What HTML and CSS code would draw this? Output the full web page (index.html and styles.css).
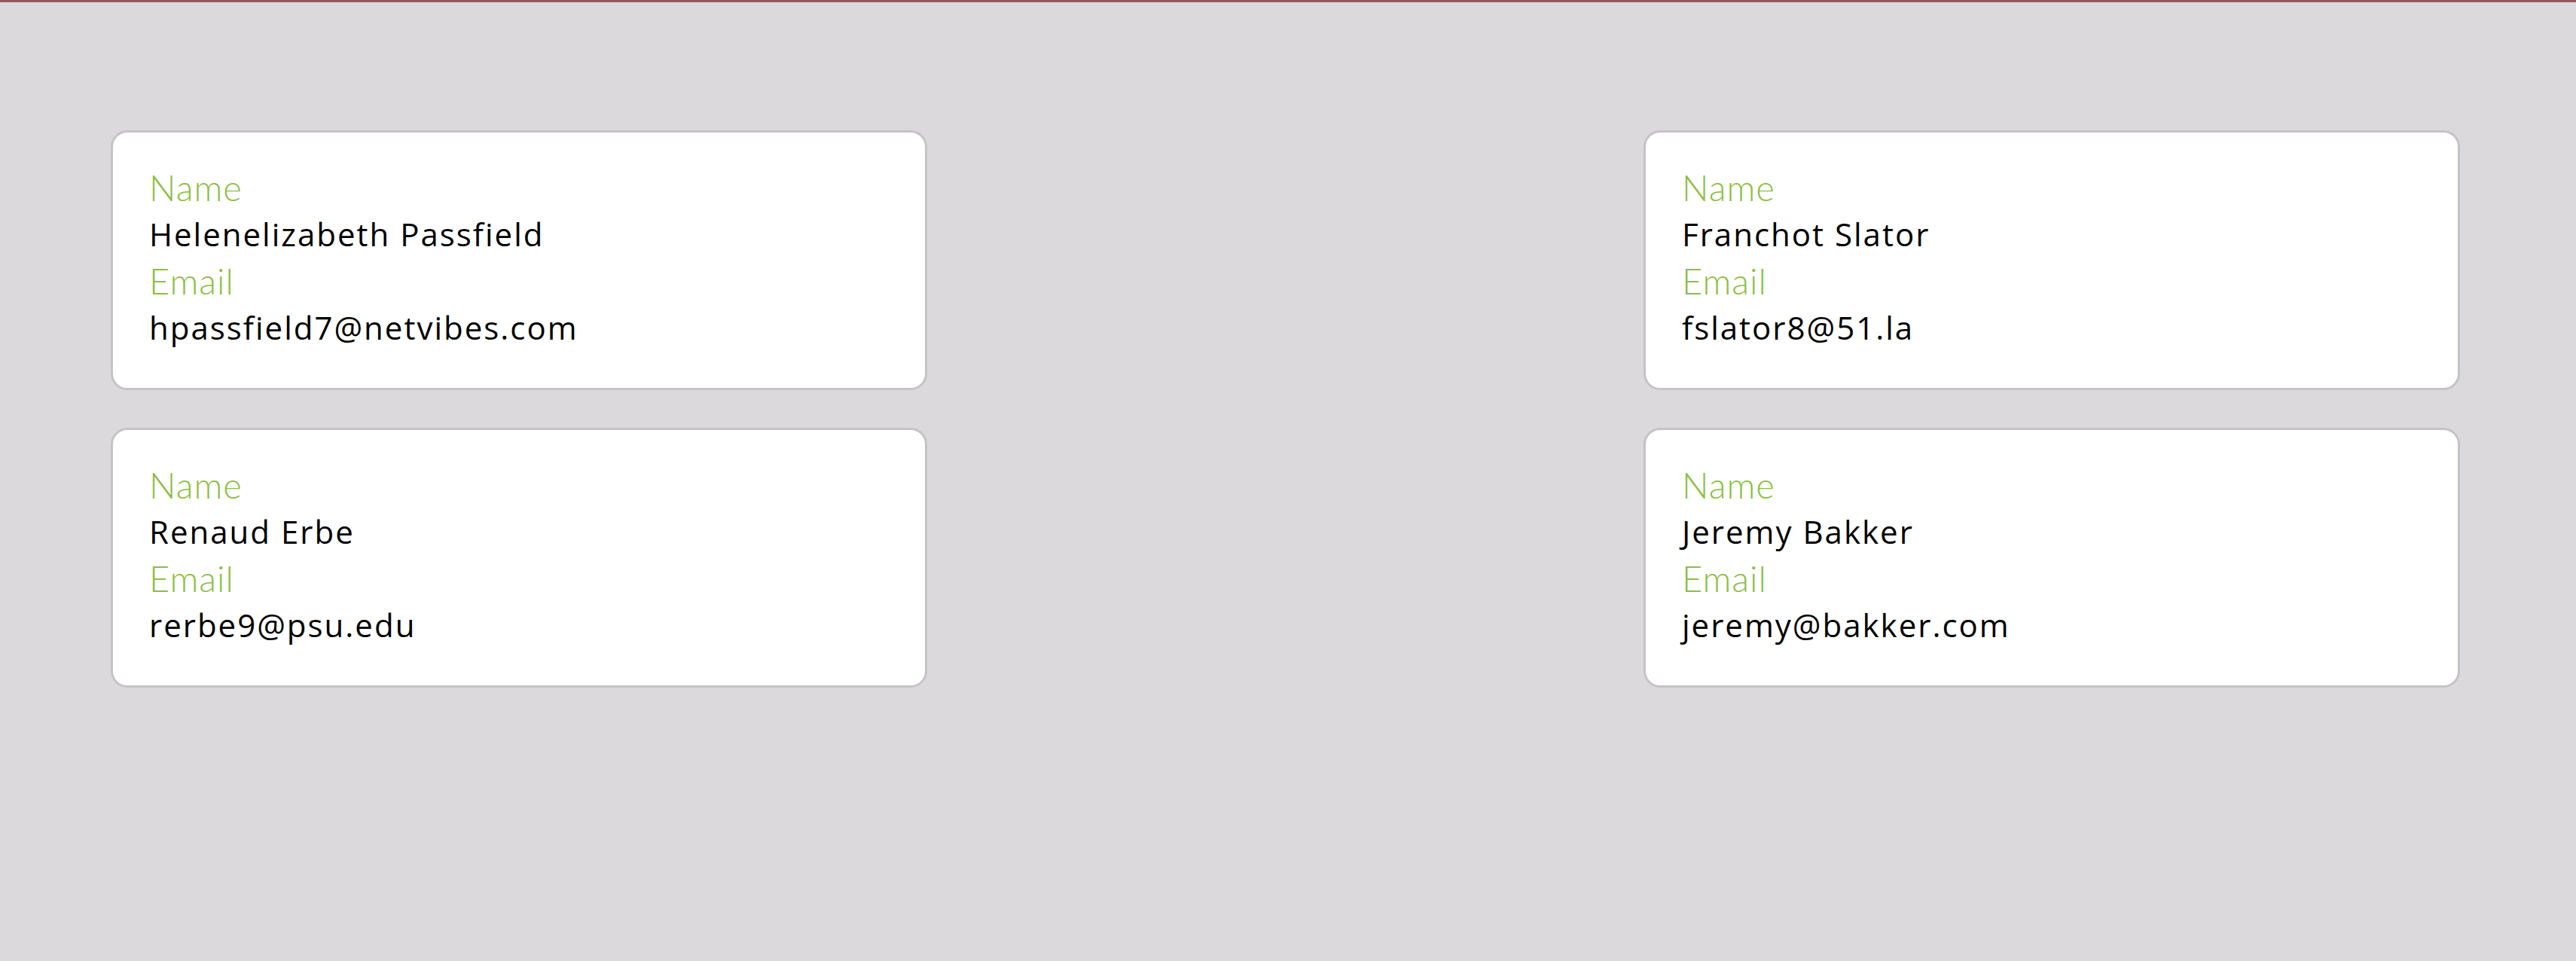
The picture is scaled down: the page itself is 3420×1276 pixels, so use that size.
FILE: index.html
```html
<!DOCTYPE html>
<html lang="en">
<head>
<meta charset="utf-8">
<title>Contacts</title>
<link rel="stylesheet" href="styles.css">
</head>
<body>
<div class="topbar"></div>
<main class="board">
  <section class="column">
    <article class="card">
      <div class="label">Name</div>
      <div class="value">Helenelizabeth Passfield</div>
      <div class="label">Email</div>
      <div class="value">hpassfield7@netvibes.com</div>
    </article>
    <article class="card">
      <div class="label">Name</div>
      <div class="value">Renaud Erbe</div>
      <div class="label">Email</div>
      <div class="value">rerbe9@psu.edu</div>
    </article>
  </section>
  <section class="column">
    <article class="card">
      <div class="label">Name</div>
      <div class="value">Franchot Slator</div>
      <div class="label">Email</div>
      <div class="value">fslator8@51.la</div>
    </article>
    <article class="card">
      <div class="label">Name</div>
      <div class="value">Jeremy Bakker</div>
      <div class="label">Email</div>
      <div class="value">jeremy@bakker.com</div>
    </article>
  </section>
</main>
</body>
</html>
```

FILE: styles.css
```css
html, body {
  margin: 0;
  padding: 0;
}
body {
  background: #dcd9dd;
  font-family: "Lato", "Liberation Sans", sans-serif;
  min-height: 1276px;
}
.topbar {
  height: 3px;
  background: #95595b;
}
.board {
  display: flex;
  justify-content: space-between;
  padding: 170px 154px 0 147px;
}
.column {
  display: flex;
  flex-direction: column;
  gap: 50px;
  width: 1084px;
}
.card {
  background: #ffffff;
  border: 3px solid #c5c3c6;
  border-radius: 22px;
  height: 297px;
  padding: 42px 48px 0 48px;
  box-sizing: content-box;
}
.label {
  color: #8bc03f;
  font-size: 47px;
  font-weight: 300;
  letter-spacing: 1px;
  line-height: 62px;
}
.value {
  color: #000000;
  font-family: "Open Sans", "Lato", sans-serif;
  font-size: 42px;
  font-weight: 400;
  letter-spacing: 2px;
  line-height: 62px;
}
```
